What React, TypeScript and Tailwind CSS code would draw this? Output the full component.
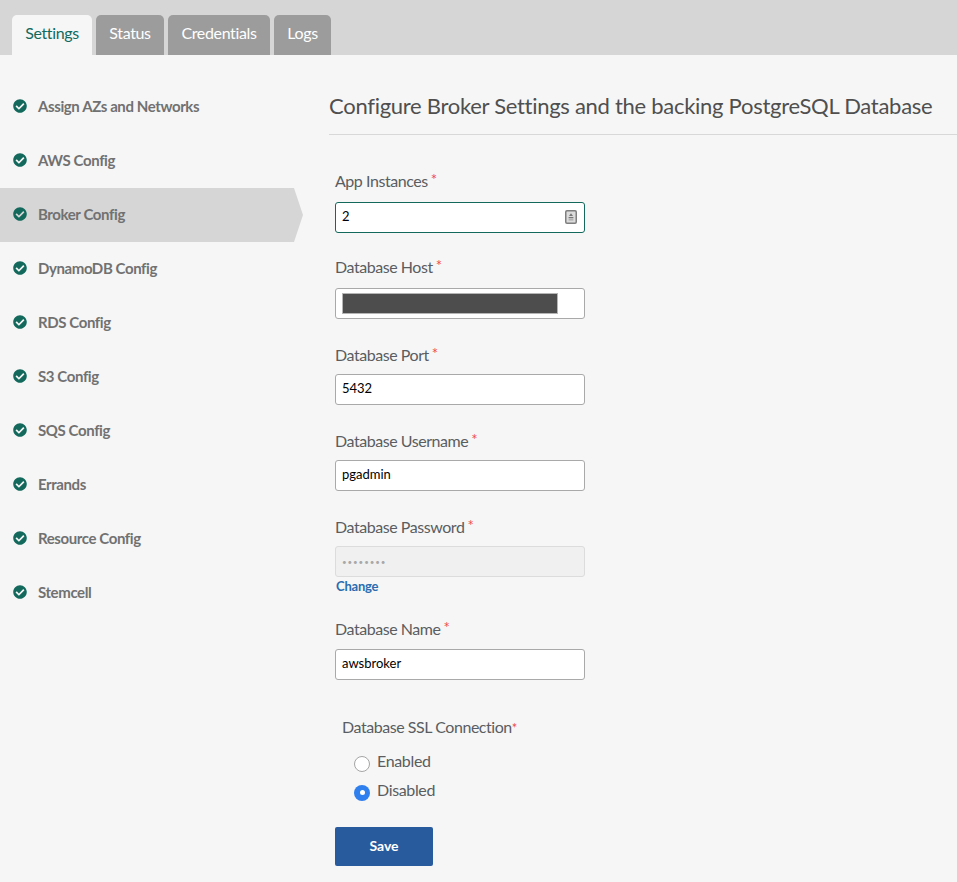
import { FaCheckCircle } from "react-icons/fa";

const steps = [
  "Assign AZs and Networks",
  "AWS Config",
  "Broker Config",
  "DynamoDB Config",
  "RDS Config",
  "S3 Config",
  "SQS Config",
  "Errands",
  "Resource Config",
  "Stemcell",
];

const inputBox =
  "flex h-[31px] w-[250px] items-center rounded-[3px] border border-[#a9a9a9] bg-white px-[6px] text-[13px] text-black";

const tabs = [
  { name: "Status", width: "w-[68px]" },
  { name: "Credentials", width: "w-[102px]" },
  { name: "Logs", width: "w-[57px]" },
];

function Label({ text }: { text: string }) {
  return (
    <label className="flex h-[21px] items-start text-[16px] leading-[21px] tracking-[-0.45px] text-[#5a5d61]">
      {text}
      <span className="ml-[3px] mt-[1px] text-[15px] leading-[17px] text-[#ef4b4b]">*</span>
    </label>
  );
}

function Field({ label, value }: { label: string; value: string }) {
  return (
    <div className="mb-[25px]">
      <Label text={label} />
      <div className={`mt-[9px] ${inputBox}`}>
        <span className="mb-[2px]">{value}</span>
      </div>
    </div>
  );
}

export default function App() {
  return (
    <div className="min-h-[882px] bg-[#f6f6f6] font-['Lato','Open_Sans',sans-serif]">
      <div className="flex h-[55px] items-end gap-[4px] bg-[#d6d6d6] pl-[12px]">
        <div className="flex h-[40px] w-[80px] items-center justify-center rounded-t-[5px] bg-[#f6f6f6] pb-[4px] text-[16px] tracking-[-0.35px] text-[#12695c]">
          Settings
        </div>
        {tabs.map((tab) => (
          <div
            key={tab.name}
            className={`flex h-[40px] ${tab.width} items-center justify-center rounded-t-[5px] bg-[#9c9c9c] pb-[4px] text-[16px] tracking-[-0.35px] text-white`}
          >
            {tab.name}
          </div>
        ))}
      </div>

      <div className="flex">
        <nav className="w-[303px] shrink-0 pt-[25px]">
          {steps.map((step) => (
            <div
              key={step}
              className={
                step === "Broker Config"
                  ? "flex h-[54px] items-center bg-[#d6d6d6] pl-[13px] [clip-path:polygon(0_0,294px_0,303px_50%,294px_100%,0_100%)]"
                  : "flex h-[54px] items-center pl-[13px]"
              }
            >
              <FaCheckCircle className="mb-[2px] h-[14px] w-[14px] text-[#12695c]" />
              <span className="ml-[11px] pb-[2px] text-[15px] font-bold tracking-[-0.4px] text-[#717171]">
                {step}
              </span>
            </div>
          ))}
        </nav>

        <main className="flex-1 pl-[26px]">
          <h1 className="flex h-[80px] items-center border-b border-[#d8d8d8] pt-[22px] text-[22px] font-normal tracking-[-0.28px] text-[#4f4f4f]">
            Configure Broker Settings and the backing PostgreSQL Database
          </h1>

          <div className="pl-[6px] pt-[35px]">
            <div className="mb-[23px]">
              <Label text="App Instances" />
              <div className="relative mt-[11px] flex h-[31px] w-[250px] items-center rounded-[3px] border border-[#12695c] bg-white px-[6px] text-[13px] text-black">
                <span className="mb-[2px]">2</span>
                <svg
                  viewBox="0 0 12 14"
                  className="absolute right-[7px] top-[7px] h-[14px] w-[12px]"
                >
                  <rect x="0.75" y="0.75" width="10.5" height="12.5" rx="1.2" fill="#dcdcdc" stroke="#7f7f7f" strokeWidth="1.5" />
                  <path d="M6 3.2 L8 6 H4 Z" fill="#777" />
                  <rect x="3.6" y="7" width="4.8" height="1.3" fill="#777" />
                  <rect x="3.6" y="9.2" width="4.8" height="1.3" fill="#aaa" />
                </svg>
              </div>
            </div>

            <div className="mb-[25px]">
              <Label text="Database Host" />
              <div className={`mt-[11px] ${inputBox}`}>
                <div className="h-[21px] w-[216px] border border-[#b5b5b5] bg-[#4d4d4d]" />
              </div>
            </div>

            <Field label="Database Port" value="5432" />
            <Field label="Database Username" value="pgadmin" />

            <Label text="Database Password" />
            <div className="mt-[9px] flex h-[31px] w-[250px] items-center rounded-[3px] border border-[#dcdcdc] bg-[#f0f0f0] px-[6px] text-[8px] tracking-[0.9px] text-[#a8a8a8]">
              ••••••••
            </div>
            <a className="mb-[23px] ml-[1px] mt-[1px] block h-[17px] text-[13px] font-bold leading-[17px] tracking-[-0.2px] text-[#2a6db0]">
              Change
            </a>

            <Label text="Database Name" />
            <div className={`mt-[10px] ${inputBox}`}>
              <span className="mb-[2px]">awsbroker</span>
            </div>

            <div className="mt-[36px] pl-[7px] text-[16px] leading-[21px] tracking-[-0.45px] text-[#5a5d61]">
              Database SSL Connection<span className="text-[13px] text-[#ef4b4b]">*</span>
            </div>
            <div className="mt-[12px] flex h-[21px] items-center pl-[19px]">
              <span className="mt-[4px] h-[16px] w-[16px] rounded-full border border-[#a5a5a5] bg-white" />
              <span className="mb-[2px] ml-[7px] text-[16px] tracking-[-0.35px] text-[#5a5d61]">Enabled</span>
            </div>
            <div className="mt-[8px] flex h-[21px] items-center pl-[19px]">
              <span className="mt-[4px] flex h-[16px] w-[16px] items-center justify-center rounded-full bg-[#2f7fee]">
                <span className="h-[5px] w-[5px] rounded-full bg-white" />
              </span>
              <span className="mb-[2px] ml-[7px] text-[16px] tracking-[-0.35px] text-[#5a5d61]">Disabled</span>
            </div>
            <button className="mt-[26px] h-[39px] w-[98px] rounded-[2px] bg-[#285a9e] pb-[3px] text-[14px] font-bold text-white">
              Save
            </button>
          </div>
        </main>
      </div>
    </div>
  );
}
